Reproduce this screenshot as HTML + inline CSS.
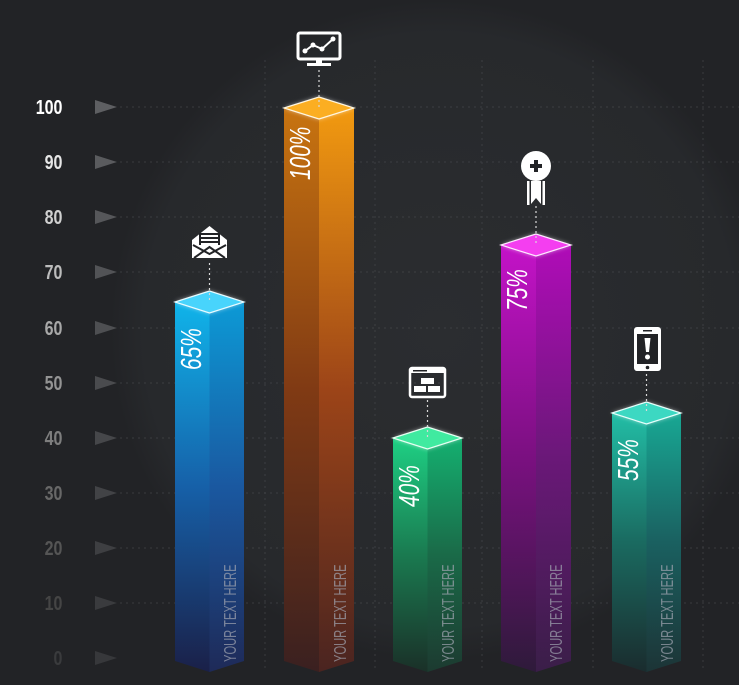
<!DOCTYPE html>
<html><head><meta charset="utf-8"><style>
html,body{margin:0;padding:0;background:#222326;}
svg{display:block}
text{font-family:"Liberation Sans",sans-serif}
</style></head><body>
<svg width="739" height="685" viewBox="0 0 739 685" xmlns="http://www.w3.org/2000/svg">
<defs>
<radialGradient id="bg" cx="440" cy="330" r="330" gradientUnits="userSpaceOnUse">
<stop offset="0" stop-color="#2b2d30"/><stop offset="0.9" stop-color="#27292c"/><stop offset="1" stop-color="#222326"/>
</radialGradient>
<linearGradient id="b1l" x1="0" y1="0" x2="0" y2="1"><stop offset="0" stop-color="#10b4ea"/><stop offset="0.5" stop-color="#1660a8"/><stop offset="1" stop-color="#1a2048"/></linearGradient>
<linearGradient id="b1r" x1="0" y1="0" x2="0" y2="1"><stop offset="0" stop-color="#0c9ad6"/><stop offset="0.5" stop-color="#1a58a0"/><stop offset="1" stop-color="#1e2a58"/></linearGradient>
<linearGradient id="b2l" x1="0" y1="0" x2="0" y2="1"><stop offset="0" stop-color="#c87410"/><stop offset="0.5" stop-color="#803a14"/><stop offset="1" stop-color="#3a2020"/></linearGradient>
<linearGradient id="b2r" x1="0" y1="0" x2="0" y2="1"><stop offset="0" stop-color="#f29a10"/><stop offset="0.5" stop-color="#9c4418"/><stop offset="1" stop-color="#4a2420"/></linearGradient>
<linearGradient id="b3l" x1="0" y1="0" x2="0" y2="1"><stop offset="0" stop-color="#1ed084"/><stop offset="0.5" stop-color="#1a7a50"/><stop offset="1" stop-color="#1a3028"/></linearGradient>
<linearGradient id="b3r" x1="0" y1="0" x2="0" y2="1"><stop offset="0" stop-color="#14b070"/><stop offset="0.5" stop-color="#1a6a48"/><stop offset="1" stop-color="#1c3a30"/></linearGradient>
<linearGradient id="b4l" x1="0" y1="0" x2="0" y2="1"><stop offset="0" stop-color="#c412c8"/><stop offset="0.5" stop-color="#7a1080"/><stop offset="1" stop-color="#2e1a3a"/></linearGradient>
<linearGradient id="b4r" x1="0" y1="0" x2="0" y2="1"><stop offset="0" stop-color="#b00cb8"/><stop offset="0.5" stop-color="#6a1878"/><stop offset="1" stop-color="#3a1e48"/></linearGradient>
<linearGradient id="b5l" x1="0" y1="0" x2="0" y2="1"><stop offset="0" stop-color="#22bea6"/><stop offset="0.5" stop-color="#1a6a60"/><stop offset="1" stop-color="#1a2c2e"/></linearGradient>
<linearGradient id="b5r" x1="0" y1="0" x2="0" y2="1"><stop offset="0" stop-color="#18a894"/><stop offset="0.5" stop-color="#1a6060"/><stop offset="1" stop-color="#1c3436"/></linearGradient>
<filter id="glow" x="-20%" y="-50%" width="140%" height="200%"><feGaussianBlur stdDeviation="2.5"/></filter>
</defs>
<rect width="739" height="685" fill="url(#bg)"/>
<!-- grid -->
<g stroke="#4a4c50" stroke-width="1" stroke-dasharray="2 4" opacity="0.6">
<line x1="120" y1="107" x2="739" y2="107"/><line x1="120" y1="162" x2="739" y2="162"/><line x1="120" y1="217" x2="739" y2="217"/><line x1="120" y1="272" x2="739" y2="272"/><line x1="120" y1="328" x2="739" y2="328"/><line x1="120" y1="383" x2="739" y2="383"/><line x1="120" y1="438" x2="739" y2="438"/><line x1="120" y1="493" x2="739" y2="493"/><line x1="120" y1="548" x2="739" y2="548"/><line x1="120" y1="603" x2="739" y2="603"/>
<line x1="265" y1="60" x2="265" y2="670"/><line x1="375" y1="60" x2="375" y2="670"/><line x1="482" y1="60" x2="482" y2="670"/><line x1="593" y1="60" x2="593" y2="670"/><line x1="703" y1="60" x2="703" y2="670"/>
</g>
<!-- axis -->
<g font-size="20" font-weight="bold" text-anchor="end" transform="scale(0.8,1)">
<text x="78" y="114" fill="#ffffff">100</text>
<text x="78" y="169" fill="#e6e6e6">90</text>
<text x="78" y="224" fill="#d0d0d0">80</text>
<text x="78" y="279" fill="#bcbcbc">70</text>
<text x="78" y="335" fill="#a8a8a8">60</text>
<text x="78" y="390" fill="#949494">50</text>
<text x="78" y="445" fill="#7e7e7e">40</text>
<text x="78" y="500" fill="#686868">30</text>
<text x="78" y="555" fill="#555555">20</text>
<text x="78" y="610" fill="#454545">10</text>
<text x="78" y="665" fill="#3a3b3d">0</text>
</g>
<g>
<polygon points="95,100 117,107 95,114" fill="#5e5f62"/>
<polygon points="95,155 117,162 95,169" fill="#5a5b5e"/>
<polygon points="95,210 117,217 95,224" fill="#56575a"/>
<polygon points="95,265 117,272 95,279" fill="#525356"/>
<polygon points="95,321 117,328 95,335" fill="#4e4f52"/>
<polygon points="95,376 117,383 95,390" fill="#4a4b4e"/>
<polygon points="95,431 117,438 95,445" fill="#46474a"/>
<polygon points="95,486 117,493 95,500" fill="#424346"/>
<polygon points="95,541 117,548 95,555" fill="#3e3f42"/>
<polygon points="95,596 117,603 95,610" fill="#3a3b3e"/>
<polygon points="95,651 117,658 95,665" fill="#37383b"/>
</g>

<!-- bars -->
<polygon points="175,302 209.5,313 209.5,672 175,661" fill="url(#b1l)"/>
<polygon points="209.5,313 244,302 244,661 209.5,672" fill="url(#b1r)"/>
<polygon points="175,302 209.5,291 244,302 209.5,313" fill="#fff" opacity="0.6" filter="url(#glow)"/>
<polygon points="175,302 209.5,291 244,302 209.5,313" fill="#48d4fc" stroke="#e8fbff" stroke-width="1.2"/>

<polygon points="284,108 319,119 319,672 284,661" fill="url(#b2l)"/>
<polygon points="319,119 354,108 354,661 319,672" fill="url(#b2r)"/>
<polygon points="284,108 319,97 354,108 319,119" fill="#fff" opacity="0.6" filter="url(#glow)"/>
<polygon points="284,108 319,97 354,108 319,119" fill="#fbae22" stroke="#fff6e0" stroke-width="1.2"/>

<polygon points="393,438 427.5,449 427.5,672 393,661" fill="url(#b3l)"/>
<polygon points="427.5,449 462,438 462,661 427.5,672" fill="url(#b3r)"/>
<polygon points="393,438 427.5,427 462,438 427.5,449" fill="#fff" opacity="0.6" filter="url(#glow)"/>
<polygon points="393,438 427.5,427 462,438 427.5,449" fill="#40eaa0" stroke="#e6fff2" stroke-width="1.2"/>

<polygon points="501,245 536,256 536,672 501,661" fill="url(#b4l)"/>
<polygon points="536,256 571,245 571,661 536,672" fill="url(#b4r)"/>
<polygon points="501,245 536,234 571,245 536,256" fill="#fff" opacity="0.6" filter="url(#glow)"/>
<polygon points="501,245 536,234 571,245 536,256" fill="#f43ef0" stroke="#ffe8ff" stroke-width="1.2"/>

<polygon points="612,413 646.5,424 646.5,672 612,661" fill="url(#b5l)"/>
<polygon points="646.5,424 681,413 681,661 646.5,672" fill="url(#b5r)"/>
<polygon points="612,413 646.5,402 681,413 646.5,424" fill="#fff" opacity="0.6" filter="url(#glow)"/>
<polygon points="612,413 646.5,402 681,413 646.5,424" fill="#3cd8c2" stroke="#e6fffb" stroke-width="1.2"/>

<g stroke="#d8d8d8" stroke-width="1.2" stroke-dasharray="2 3">
<line x1="209.5" y1="263" x2="209.5" y2="302"/>
<line x1="319" y1="70" x2="319" y2="108"/>
<line x1="427.5" y1="400" x2="427.5" y2="438"/>
<line x1="536" y1="206" x2="536" y2="245"/>
<line x1="646.5" y1="374" x2="646.5" y2="413"/>
</g>

<g fill="#ffffff" font-size="29" font-style="italic">
<text transform="translate(201,370) rotate(-90) scale(0.72,1)">65%</text>
<text transform="translate(310,180) rotate(-90) scale(0.72,1)">100%</text>
<text transform="translate(419,507) rotate(-90) scale(0.72,1)">40%</text>
<text transform="translate(527,311) rotate(-90) scale(0.72,1)">75%</text>
<text transform="translate(638,481) rotate(-90) scale(0.72,1)">55%</text>
</g>
<g font-size="18" fill="#a0a4b0" opacity="0.7">
<text transform="translate(236,662) rotate(-90) scale(0.62,1)">YOUR TEXT HERE</text>
<text transform="translate(346,662) rotate(-90) scale(0.62,1)">YOUR TEXT HERE</text>
<text transform="translate(454,662) rotate(-90) scale(0.62,1)">YOUR TEXT HERE</text>
<text transform="translate(562,662) rotate(-90) scale(0.62,1)">YOUR TEXT HERE</text>
<text transform="translate(673,662) rotate(-90) scale(0.62,1)">YOUR TEXT HERE</text>
</g>

<!-- envelope -->
<g>
<polygon points="192,240 209.5,226 227,240 227,258 192,258" fill="#fff"/>
<rect x="199" y="233" width="21" height="12" fill="#222326"/>
<rect x="201" y="235" width="17" height="2" fill="#fff"/><rect x="201" y="239" width="17" height="2" fill="#fff"/><rect x="201" y="243" width="17" height="2" fill="#fff"/>
<path d="M193,245 L209.5,254 L226,245" stroke="#222326" stroke-width="2" fill="none"/>
<path d="M194,258 L209.5,247 L225,258" stroke="#222326" stroke-width="2" fill="none"/>
</g>
<!-- monitor -->
<g>
<rect x="298" y="33" width="42" height="26" rx="2" fill="none" stroke="#fff" stroke-width="3"/>
<rect x="316" y="59" width="6" height="5" fill="#fff"/><rect x="307" y="63" width="24" height="3" fill="#fff"/>
<polyline points="305,51 313,45 322,49 333,39" fill="none" stroke="#fff" stroke-width="2"/>
<circle cx="305" cy="51" r="2.5" fill="#fff"/><circle cx="313" cy="45" r="2.5" fill="#fff"/><circle cx="322" cy="49" r="2.5" fill="#fff"/><circle cx="333" cy="39" r="2.5" fill="#fff"/>
</g>
<!-- browser -->
<g>
<rect x="410" y="368" width="35" height="29" rx="2" fill="none" stroke="#fff" stroke-width="2.5"/>
<rect x="410" y="368" width="35" height="5" fill="#fff"/>
<rect x="413" y="370" width="14" height="1.5" fill="#222326"/>
<rect x="421" y="378" width="13" height="6" fill="#fff"/>
<rect x="414" y="386" width="12" height="6" fill="#fff"/><rect x="428" y="386" width="12" height="6" fill="#fff"/>
</g>
<!-- award -->
<g>
<circle cx="536" cy="166" r="15" fill="#fff"/>
<path d="M530,166 h12 M536,160 v12" stroke="#222326" stroke-width="4"/>
<rect x="527" y="181" width="2.5" height="24" fill="#fff"/>
<rect x="542.5" y="181" width="2.5" height="24" fill="#fff"/>
<polygon points="531,181 541,181 541,204 536,198 531,204" fill="#fff"/>
</g>
<!-- phone -->
<g>
<rect x="634" y="327" width="27" height="44" rx="3" fill="#fff"/>
<rect x="637" y="334" width="21" height="30" fill="#222326"/>
<rect x="643" y="330" width="9" height="1.5" fill="#222326"/>
<circle cx="647.5" cy="367.5" r="1.8" fill="#222326"/>
<path d="M644.5,338 h6 l-1.5,14 h-3 z" fill="#fff"/>
<circle cx="647.5" cy="357" r="2.5" fill="#fff"/>
</g>
</svg>
</body></html>
